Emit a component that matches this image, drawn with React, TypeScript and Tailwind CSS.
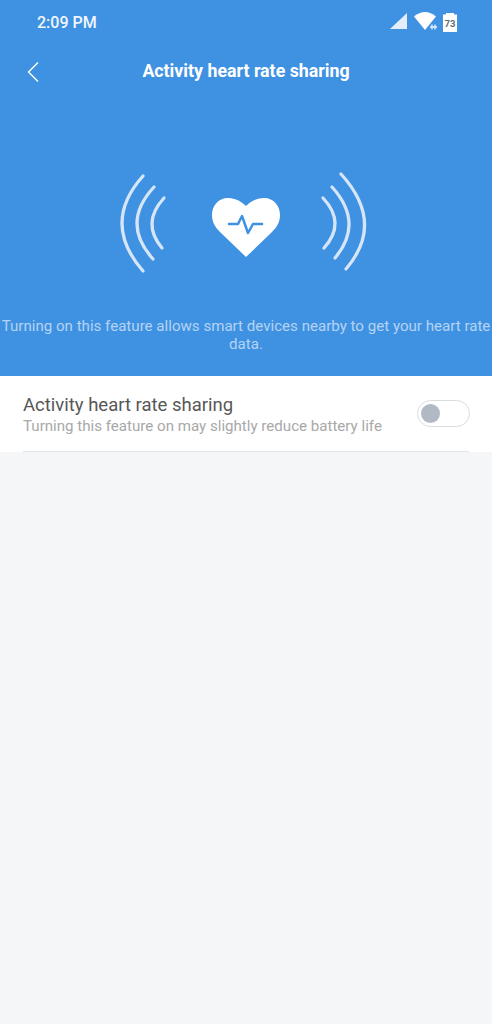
import React from "react";

function StatusIcons() {
  return (
    <svg width="72" height="32" viewBox="0 0 72 32" className="block">
      {/* signal */}
      <path d="M0 23 L17 7 V23 Z" fill="#e3eefa" />
      {/* wifi */}
      <path d="M24 10.5 C31 4.5 39 4.5 46 10.5 L35 24 Z" fill="#ffffff" />
      <path d="M40 21 h7 M42 18.5 v5 M45 18.5 v5" stroke="#e3eefa" strokeWidth="1.4" fill="none" />
      {/* battery */}
      <path d="M56 7 h8 v1.5 h3 v17.5 h-14 v-17.5 h3 Z" fill="#ffffff" />
      <text x="60" y="20.5" textAnchor="middle" fontSize="9.5" fontWeight="700" fill="#666c74" fontFamily="Roboto, sans-serif">73</text>
    </svg>
  );
}

function Illustration() {
  return (
    <svg width="290" height="120" viewBox="0 0 290 120" className="block">
      <g fill="none" stroke="#d6e6f8" strokeWidth="3.2" strokeLinecap="round">
        <path d="M43 16 Q1 63 43 111" />
        <path d="M54 27 Q20.5 63 53 99" />
        <path d="M64 38 Q41 63 62 88" />
        <path d="M223 38 Q246.5 63 224 88" />
        <path d="M232 27 Q264.5 63 235 98" />
        <path d="M241 14 Q285.5 63 246 109" />
      </g>
      <path
        d="M146 46 C140 40 133 38 128 38 C118 38 112 46 112 55 C112 62 115 67 120 72 L146 97 L172 72 C177 67 180 62 180 55 C180 46 174 38 164 38 C159 38 152 40 146 46 Z"
        fill="#ffffff"
      />
      <path
        d="M129 64 H138 L142 56 L148 73 L153 64 H162"
        fill="none"
        stroke="#3f92e2"
        strokeWidth="2.5"
        strokeLinecap="round"
        strokeLinejoin="round"
      />
    </svg>
  );
}

export default function App() {
  return (
    <div className="min-h-[1024px] bg-[#f5f6f7] font-['Roboto',sans-serif]">
      <div className="h-[376px] bg-[#3f92e2] flex flex-col">
        {/* Status bar */}
        <div className="h-[44px] flex items-center justify-between pl-[37px] pr-[30px]">
          <span className="text-[16px] font-medium text-[#f2f7fd] pt-[1px]">2:09 PM</span>
          <StatusIcons />
        </div>

        {/* Title */}
        <div className="h-[54px] flex items-center px-[26px] pt-[1px]">
          <svg width="14" height="22" viewBox="0 0 14 22" className="block shrink-0">
            <path d="M12 1.5 L2.5 11 L12 20.5" fill="none" stroke="#ffffff" strokeWidth="1.4" />
          </svg>
          <h1 className="flex-1 text-center pr-[14px] text-[17.8px] font-bold text-white">
            Activity heart rate sharing
          </h1>
        </div>

        <div className="flex justify-center mt-[62px] pr-[2px]">
          <Illustration />
        </div>

        <p className="mt-[37px] text-center text-[15.1px] leading-[18px] text-[#b5d3f3]">
          Turning on this feature allows smart devices nearby to get your heart rate data.
        </p>
      </div>

      {/* Setting row */}
      <div className="bg-white px-[23px]">
        <div className="h-[76px] flex items-center justify-between border-b border-[#e2e4e7]">
          <div>
            <div className="text-[18.5px] leading-[24px] text-[#575757]">Activity heart rate sharing</div>
            <div className="text-[15.1px] leading-[18px] text-[#a8a8a8]">
              Turning this feature on may slightly reduce battery life
            </div>
          </div>
          <div className="w-[53px] h-[27px] rounded-full border border-[#d9dbde] bg-white flex items-center pl-[3px] mr-[-1px]">
            <div className="w-[19px] h-[19px] rounded-full bg-[#b0b9c4]" />
          </div>
        </div>
      </div>
    </div>
  );
}
